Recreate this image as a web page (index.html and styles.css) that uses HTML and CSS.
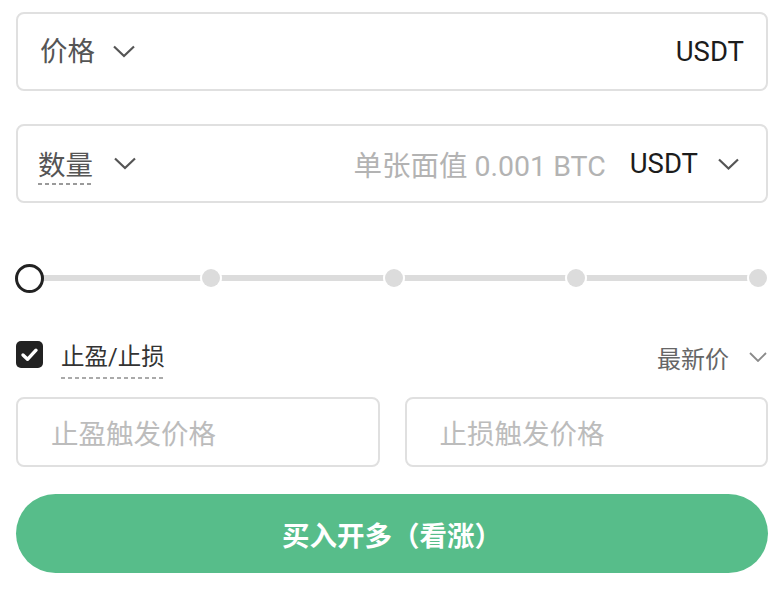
FILE: index.html
```html
<!DOCTYPE html>
<html lang="zh">
<head>
<meta charset="utf-8">
<link rel="stylesheet" href="styles.css">
</head>
<body>
<div class="panel">
  <div class="field">
    <span class="field-label">价格</span>
    <svg class="chev" width="22" height="13" viewBox="0 0 22 13"><path d="M1 1.5 L11 11 L21 1.5" fill="none" stroke="#555" stroke-width="2.2"/></svg>
    <span class="spacer"></span>
    <span class="unit">USDT</span>
  </div>

  <div class="field field-qty">
    <span class="field-label dashed">数量</span>
    <svg class="chev chev-q" width="22" height="13" viewBox="0 0 22 13"><path d="M1 1.5 L11 11 L21 1.5" fill="none" stroke="#555" stroke-width="2.2"/></svg>
    <span class="spacer"></span>
    <span class="hint">单张面值 0.001 BTC</span>
    <span class="unit unit-sel">USDT</span>
    <svg class="chev chev-r" width="21" height="12" viewBox="0 0 21 12"><path d="M1 1.5 L10.5 10.5 L20 1.5" fill="none" stroke="#555" stroke-width="2.2"/></svg>
  </div>

  <div class="slider">
    <span class="stop"><span class="ring"></span></span>
    <span class="stop"><span class="dot"></span></span>
    <span class="stop"><span class="dot"></span></span>
    <span class="stop"><span class="dot"></span></span>
    <span class="stop"><span class="dot"></span></span>
  </div>

  <div class="tpsl-row">
    <div class="tpsl-left">
      <span class="checkbox">
        <svg width="27" height="27" viewBox="0 0 27 27"><path d="M7 14 L11.5 18.3 L20 9.2" fill="none" stroke="#fff" stroke-width="3.4" stroke-linecap="round" stroke-linejoin="round"/></svg>
      </span>
      <span class="tpsl-label">止盈/止损</span>
    </div>
    <div class="tpsl-right">
      <span class="price-type">最新价</span>
      <svg width="18" height="10" viewBox="0 0 18 10"><path d="M1 1 L9 9 L17 1" fill="none" stroke="#8a8a8a" stroke-width="1.8"/></svg>
    </div>
  </div>

  <div class="inputs">
    <div class="input">止盈触发价格</div>
    <div class="input">止损触发价格</div>
  </div>

  <button class="buy">买入开多（看涨）</button>
</div>
</body>
</html>
```

FILE: styles.css
```css
* { box-sizing: border-box; }

body {
  margin: 0;
  background: #fff;
  font-family: Roboto, "Noto Sans CJK SC", sans-serif;
}

.panel {
  width: 782px;
  padding: 12px 14px 0 16px;
}

.field {
  height: 79px;
  border: 2px solid #e0e0e0;
  border-radius: 8px;
  display: flex;
  align-items: center;
  padding: 0 22px 0 22px;
}

.field-qty {
  margin-top: 33px;
  padding-left: 20px;
  padding-right: 27px;
}

.field-label {
  font-size: 27.5px;
  color: #555;
  line-height: 30px;
}

.field-label.dashed {
  padding-bottom: 4px;
  background: repeating-linear-gradient(to right, #9a9a9a 0 4px, transparent 4px 7px) left bottom / 100% 2px no-repeat;
  margin-top: 8px;
}

.chev {
  margin-left: 18px;
  display: block;
}

.chev-q {
  margin-left: 21px;
}

.spacer { flex: 1; }

.unit {
  font-size: 27.5px;
  color: #1c1c1c;
}

.hint {
  font-size: 28.5px;
  color: #b3b3b3;
}

.unit-sel {
  margin-left: 24px;
}

.chev-r {
  margin-left: 20px;
}

.slider {
  margin: 60px -5px 0 -2px;
  height: 30px;
  display: flex;
  justify-content: space-between;
  align-items: center;
  background: linear-gradient(#dcdcdc, #dcdcdc) center / calc(100% - 30px) 6px no-repeat;
}

.stop {
  width: 30px;
  height: 30px;
  display: flex;
  align-items: center;
  justify-content: center;
}

.ring {
  width: 29px;
  height: 29px;
  border-radius: 50%;
  border: 3px solid #222;
  background: #fff;
}

.dot {
  width: 18px;
  height: 18px;
  border-radius: 50%;
  background: #dcdcdc;
  box-shadow: 0 0 0 2px #fff;
}

.tpsl-row {
  margin-top: 48px;
  display: flex;
  justify-content: space-between;
  align-items: flex-start;
}

.tpsl-left {
  display: flex;
  align-items: flex-start;
}

.checkbox {
  width: 27px;
  height: 27px;
  border-radius: 5px;
  background: #222;
  display: block;
}

.checkbox svg { display: block; }

.tpsl-label {
  margin-left: 18px;
  font-size: 23.5px;
  line-height: 27px;
  color: #333;
  padding-top: 3px;
  padding-bottom: 8px;
  background: repeating-linear-gradient(to right, #aaa 0 4px, transparent 4px 7px) left bottom / 100% 2px no-repeat;
}

.tpsl-right {
  display: flex;
  align-items: center;
  height: 32px;
  padding-right: 1px;
}

.price-type {
  font-size: 24px;
  color: #666;
  margin-right: 20px;
}

.tpsl-right svg { display: block; }

.inputs {
  margin-top: 18px;
  display: flex;
  gap: 25px;
}

.input {
  flex: 1;
  height: 70px;
  border: 2px solid #e0e0e0;
  border-radius: 8px;
  display: flex;
  align-items: center;
  padding-left: 33px;
  font-size: 27.5px;
  color: #bcbcbc;
}

.buy {
  display: block;
  width: 100%;
  margin-top: 27px;
  height: 79px;
  border: 0;
  border-radius: 40px;
  background: #57bd8a;
  color: #fff;
  font-family: Roboto, "Noto Sans CJK SC", sans-serif;
  font-size: 27.5px;
  font-weight: 700;
}
```
